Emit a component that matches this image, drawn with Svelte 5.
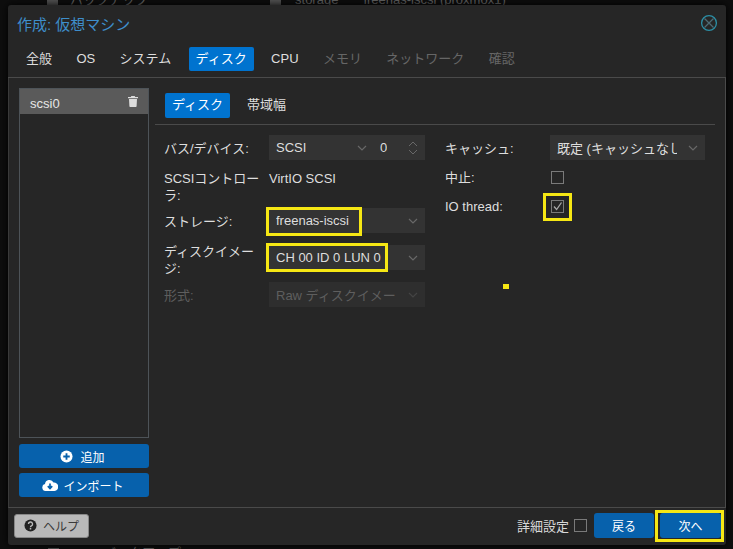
<script>
  const tabs = [
    { t: '全般' }, { t: 'OS' }, { t: 'システム' }, { t: 'ディスク', on: true }, { t: 'CPU' },
    { t: 'メモリ', off: true }, { t: 'ネットワーク', off: true }, { t: '確認', off: true }
  ];
</script>

<div class="page">
  <div class="ghost">
    <i class="gi"></i><span class="g1">バックアップ</span><i class="gi gi2"></i><span class="g2">storage</span><span class="g3">freenas-iscsi (proxmox1)</span>
  </div>
  <div class="ghost low">
    <i class="gi"></i><span class="g1">バックアップ</span>
  </div>
  <div class="win">
    <header class="head">
      <h1>作成: 仮想マシン</h1>
      <svg class="close" viewBox="0 0 18 18" width="18" height="18" fill="none" stroke-width="1.300">
        <path d="M4.500 4.500l9 9M13.500 4.500l-9 9" stroke="#4d6b75" />
        <circle cx="9" cy="9" r="7.400" stroke="#2c8fa6" />
      </svg>
    </header>
    <nav class="tabs">
      {#each tabs as tab}
        <span class="tab" class:on={tab.on} class:off={tab.off}>{tab.t}</span>
      {/each}
    </nav>
    <main class="body">
      <aside class="side">
        <div class="list">
          <div class="item">
            <span>scsi0</span>
            <svg class="trash" viewBox="0 0 10 11" width="10" height="11" fill="#dcdcdc">
              <path d="M3.300 0h3.400l.5 1H10v1.300H0V1h2.800zM1 3h8l-.4 7.200a.8.800 0 0 1-.8.800H2.200a.8.800 0 0 1-.8-.8z" />
            </svg>
          </div>
        </div>
        <button class="blue wide add">
          <svg viewBox="0 0 14 14" width="13" height="13"><circle cx="7" cy="7" r="6.500" fill="#fff" /><path d="M7 3.500v7M3.500 7h7" stroke="#0761ac" stroke-width="2" /></svg>
          追加
        </button>
        <button class="blue wide imp">
          <svg viewBox="0 0 16 12" width="16" height="12"><path fill="#fff" d="M4 12a3.500 3.500 0 0 1-1-6.900A4.500 4.500 0 0 1 11.500 3.500 4.200 4.200 0 0 1 12.500 12z" /><path d="M8 4.500v4.500M5.800 7.200 8 9.500l2.200-2.300" stroke="#0761ac" stroke-width="1.700" fill="none" /></svg>
          インポート
        </button>
      </aside>
      <section class="panel">
        <div class="subtabs">
          <span class="tab on">ディスク</span>
          <span class="tab">帯域幅</span>
        </div>
        <div class="form">
          <div class="col">
            <div class="row">
              <span class="lab">バス/デバイス:</span>
              <div class="pair">
                <div class="field bus"><span>SCSI</span><svg class="chev" viewBox="0 0 10 6" width="10" height="6"><path d="M1 1l4 4 4-4" /></svg></div>
                <div class="field num"><span>0</span>
                  <svg class="spin" viewBox="0 0 10 16" width="10" height="16"><path d="M1 6l4-4 4 4M1 10l4 4 4-4" /></svg>
                </div>
              </div>
            </div>
            <div class="row plain">
              <span class="lab">SCSIコントローラ:</span>
              <span class="val">VirtIO SCSI</span>
            </div>
            <div class="row">
              <span class="lab">ストレージ:</span>
              <div class="field"><span>freenas-iscsi</span><svg class="chev" viewBox="0 0 10 6" width="10" height="6"><path d="M1 1l4 4 4-4" /></svg><i class="mark m1"></i></div>
            </div>
            <div class="row">
              <span class="lab two">ディスクイメージ:</span>
              <div class="field"><span>CH 00 ID 0 LUN 0</span><svg class="chev" viewBox="0 0 10 6" width="10" height="6"><path d="M1 1l4 4 4-4" /></svg><i class="mark m2"></i></div>
            </div>
            <div class="row dim">
              <span class="lab">形式:</span>
              <div class="field"><span>Raw ディスクイメージ</span><svg class="chev" viewBox="0 0 10 6" width="10" height="6"><path d="M1 1l4 4 4-4" /></svg></div>
            </div>
          </div>
          <div class="col right">
            <div class="row">
              <span class="lab">キャッシュ:</span>
              <div class="field"><span>既定 (キャッシュなし)</span><svg class="chev" viewBox="0 0 10 6" width="10" height="6"><path d="M1 1l4 4 4-4" /></svg></div>
            </div>
            <div class="row check">
              <span class="lab">中止:</span>
              <span class="box"></span>
            </div>
            <div class="row check">
              <span class="lab">IO thread:</span>
              <span class="box">
                <svg viewBox="0 0 11 11" width="11" height="11" fill="none" stroke="#a8a8a8" stroke-width="1.300"><path d="M2 5.500 4.600 8.500 9.500 1.500" /></svg>
                <i class="mark m3"></i>
              </span>
            </div>
          </div>
          <i class="dot"></i>
        </div>
      </section>
    </main>
    <footer class="foot">
      <button class="help">
        <svg viewBox="0 0 14 14" width="13" height="13"><circle cx="7" cy="7" r="6.500" fill="#222" /><path d="M4.800 5.400a2.200 2.200 0 1 1 3.200 2c-.7.400-1 .7-1 1.400" fill="none" stroke="#bbb" stroke-width="1.500" /><rect x="6.200" y="9.700" width="1.600" height="1.600" fill="#bbb" /></svg>
        ヘルプ
      </button>
      <div class="spacer"></div>
      <span class="adv">詳細設定</span><span class="box small"></span>
      <button class="blue nav">戻る</button>
      <button class="blue nav next">次へ<i class="mark m4"></i></button>
    </footer>
  </div>
</div>

<style>
  :global(body) {
    margin: 0;
    background: #0e0e0e;
  }
  .page {
    position: relative;
    width: 733px;
    height: 549px;
    overflow: hidden;
    font-family: "Liberation Sans", "Noto Sans CJK JP", sans-serif;
    font-size: 13px;
    color: #dedede;
  }
  .ghost {
    position: absolute;
    top: -8px;
    left: 47px;
    color: #666;
    font-size: 13px;
    line-height: 16px;
    white-space: nowrap;
    display: flex;
    align-items: center;
  }
  .ghost.low {
    top: 545px;
    left: 48px;
  }
  .gi {
    display: block;
    width: 11px;
    height: 11px;
    background: #555;
    flex: none;
  }
  .low .g1 { margin-left: 44px; }
  .g1 { margin-left: 12px; }
  .gi2 { margin-left: 122px; }
  .g2 { margin-left: 14px; }
  .g3 { margin-left: 25px; }
  .win {
    position: absolute;
    left: 8px;
    top: 5px;
    width: 718px;
    height: 540px;
    box-sizing: border-box;
    background: #262626;
    border-radius: 3px;
    box-shadow: 0 0 8px #000;
    display: flex;
    flex-direction: column;
  }
  .head {
    height: 36px;
    padding: 0 8px 0 9px;
    display: flex;
    align-items: center;
    justify-content: space-between;
    flex: none;
  }
  h1 {
    margin: 0;
    font-size: 15px;
    font-weight: 400;
    color: #3e8ecb;
  }
  .tabs {
    flex: none;
    height: 37px;
    padding: 6px 0 0 11px;
    box-sizing: border-box;
    display: flex;
    border-bottom: 1px solid #4a4a4a;
  }
  .tab {
    height: 24px;
    padding: 0 7px;
    line-height: 23px;
    border-radius: 2px;
    margin-right: 10.4px;
    font-size: 13px;
    color: #dedede;
    white-space: nowrap;
  }
  .tab.on {
    background: #0073cf;
    color: #fff;
  }
  .tab.off { color: #666; }
  .body {
    flex: 1;
    display: flex;
    min-height: 0;
    border-bottom: 1px solid #4a4a4a;
    border-right: 1px solid #4a4a4a;
    border-left: 1px solid #3a3a3a;
  }
  .side {
    width: 130px;
    margin: 10px 0 0 10px;
    flex: none;
    display: flex;
    flex-direction: column;
  }
  .list {
    height: 350px;
    border: 1px solid #4d5358;
    margin-bottom: 6px;
    box-sizing: border-box;
    flex: none;
  }
  .item {
    height: 25px;
    background: #5a5a5a;
    display: flex;
    align-items: center;
    justify-content: space-between;
    padding: 3px 10px 0 10px;
    box-sizing: border-box;
    color: #e6e6e6;
  }
  .trash { margin-top: -4px; }
  button {
    font: inherit;
    border: 0;
    cursor: pointer;
  }
  .blue {
    background: #0761ac;
    color: #fff;
    border-radius: 3px;
    height: 24px;
    padding: 0;
    display: flex;
    align-items: center;
    justify-content: center;
    font-size: 12px;
  }
  .wide {
    width: 130px;
    margin-bottom: 5px;
    flex: none;
  }
  .add { gap: 7px; padding-right: 3px; }
  .imp { gap: 5px; padding-right: 2px; }
  .panel {
    flex: 1;
    min-width: 0;
    padding: 10px 10px 0 6px;
    display: flex;
    flex-direction: column;
  }
  .subtabs {
    height: 37px;
    box-sizing: border-box;
    display: flex;
    padding: 5px 0 0 10px;
    border-bottom: 1px solid #4a4a4a;
    flex: none;
  }
  .subtabs .tab { margin-right: 10px; height: 25px; }
  .form {
    position: relative;
    display: grid;
    grid-template-columns: 261px 260px;
    column-gap: 20px;
    padding: 10px 0 0 9px;
  }
  .col {
    display: flex;
    flex-direction: column;
  }
  .row {
    display: grid;
    grid-template-columns: 105px 156px;
    align-items: start;
    height: 25px;
    margin-bottom: 12px;
  }
  .right .row { grid-template-columns: 105px 155px; margin-bottom: 5px; }
  .lab {
    line-height: 17px;
    padding-top: 5px;
    color: #dedede;
  }
  .lab.two { padding-top: 0; margin-top: -2px; }
  .row.plain { height: 34px; margin-top: -2px; margin-bottom: 4px; }
  .plain .lab { padding-top: 0; }
  .plain .val { line-height: 17px; }
  .right .row.check { margin-bottom: 4px; align-items: center; }
  .row.check .lab { padding-top: 0; }
  .field {
    position: relative;
    height: 25px;
    background: #333;
    display: flex;
    align-items: center;
    justify-content: space-between;
    padding: 0 7px;
    box-sizing: border-box;
    white-space: nowrap;
    font-size: 13px;
  }
  .field span {
    overflow: hidden;
    white-space: nowrap;
    max-width: 120px;
  }
  .pair {
    display: flex;
  }
  .bus { width: 105px; }
  .num { width: 51px; padding-left: 6px; }
  .chev {
    flex: none;
    fill: none;
    stroke: #686868;
    stroke-width: 1.200;
  }
  .spin {
    flex: none;
    fill: none;
    stroke: #686868;
    stroke-width: 1;
  }
  .dim .lab { color: #5e5e5e; }
  .dim .field { background: #2e2e2e; color: #5e5e5e; }
  .dim .chev { stroke: #444; }
  .box {
    position: relative;
    display: block;
    width: 11px;
    height: 11px;
    border: 1px solid #7a7a7a;
    margin-left: 1px;
  }
  .box.small {
    flex: none;
    margin: 0 7px 0 5px;
  }
  .box svg { display: block; }
  .mark {
    position: absolute;
    display: block;
    border: 3px solid #f6e714;
    box-sizing: border-box;
    pointer-events: none;
  }
  .m1 { left: -3px; top: -1px; width: 96px; height: 29px; }
  .m2 { left: -3px; top: -2px; width: 122px; height: 29px; }
  .m3 { left: -9px; top: -8px; width: 29px; height: 28px; }
  .m4 { left: -5px; top: -3px; width: 69px; height: 32px; }
  .dot {
    position: absolute;
    left: 348px;
    top: 159px;
    width: 6px;
    height: 5px;
    background: #f6e714;
  }
  .foot {
    height: 37px;
    flex: none;
    box-sizing: border-box;
    display: flex;
    align-items: center;
    padding: 0 5px 2px 6px;
  }
  .spacer { flex: 1; }
  .help {
    width: 75px;
    height: 24px;
    background: #b9b9b9;
    color: #3a3a3a;
    border-radius: 3px;
    border: 1px solid #888;
    display: flex;
    align-items: center;
    justify-content: center;
    gap: 6px;
    font-size: 12px;
    padding: 0;
  }
  .adv { color: #d8d8d8; font-size: 13px; }
  .nav {
    position: relative;
    width: 60px;
    height: 25px;
    margin-right: 6px;
    flex: none;
  }
  .nav.next { margin-right: 0; width: 61px; }
</style>
